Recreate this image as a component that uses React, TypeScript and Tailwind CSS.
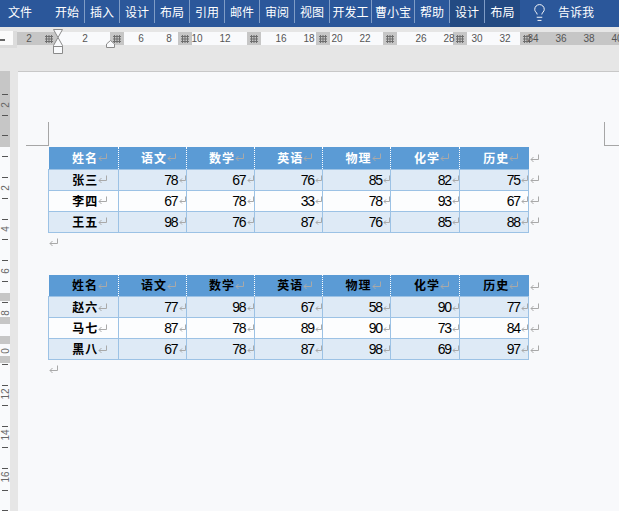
import { Lightbulb } from 'lucide-react'

const tabs = [
  ['开始', 'w-[35px]'],
  ['插入', 'w-[35px]'],
  ['设计', 'w-[35px]'],
  ['布局', 'w-[35px]'],
  ['引用', 'w-[35px]'],
  ['邮件', 'w-[35px]'],
  ['审阅', 'w-[35px]'],
  ['视图', 'w-[35px]'],
  ['开发工', 'w-[42px]'],
  ['曹小宝', 'w-[43px]'],
  ['帮助', 'w-[35px]'],
]

const whiteSeg = 'bg-[#f9fafc]'
const graySeg = 'bg-[#c6c6c6] flex items-center justify-center'

const rulerSegments = [
  ['w-[40px]', 'bg-[#c6c6c6] flex items-center justify-end pr-[4px]', true],
  ['w-[53px]', whiteSeg, false],
  ['w-[14px]', graySeg, true],
  ['w-[54px]', whiteSeg, false],
  ['w-[14px]', graySeg, true],
  ['w-[55px]', whiteSeg, false],
  ['w-[14px]', graySeg, true],
  ['w-[55px]', whiteSeg, false],
  ['w-[14px]', graySeg, true],
  ['w-[53px]', whiteSeg, false],
  ['w-[14px]', graySeg, true],
  ['w-[56px]', whiteSeg, false],
  ['w-[14px]', graySeg, true],
  ['w-[53px]', whiteSeg, false],
  ['flex-1', 'bg-[#c6c6c6] flex items-center justify-start pl-[3px]', true],
] as const

// 每 28px 一个刻度,空字符串是被分栏块盖住的位置
const rulerCells = ['2', '', '2', '', '6', '8', '10', '12', '', '16', '18', '20', '22', '', '26', '28', '30', '32', '34', '36', '38', '40']

const colWidths = ['w-[69.5px]', 'w-[68px]', 'w-[68px]', 'w-[68.5px]', 'w-[68px]', 'w-[69px]', 'w-[69px]']
const subjects = ['语文', '数学', '英语', '物理', '化学', '历史']

const table1 = [
  ['张三', 78, 67, 76, 85, 82, 75],
  ['李四', 67, 78, 33, 78, 93, 67],
  ['王五', 98, 76, 87, 76, 85, 88],
]
const table2 = [
  ['赵六', 77, 98, 67, 58, 90, 77],
  ['马七', 87, 78, 89, 90, 73, 84],
  ['黑八', 67, 78, 87, 98, 69, 97],
]

const ticks = [94, 115, 135, 156, 177, 198, 219, 239, 260, 281, 302, 364, 385, 405, 426, 447, 468, 490, 510]
const sideLabels = [
  ['2', 105], ['2', 188], ['4', 229], ['6', 271], ['8', 313], ['0', 351], ['12', 394], ['14', 435], ['16', 477],
] as const
const sideBands = [[293, 8], [317, 7], [336, 8], [356, 7]]

function ReturnMark() {
  return (
    <svg width="9" height="9" viewBox="0 0 9 9" fill="none" stroke="#a9a9a9" strokeWidth="1" className="shrink-0">
      <path d="M8.5 0.5V5.5H1M3.5 3L1 5.5L3.5 8" />
    </svg>
  )
}

// 数字单元格里的回车符更窄
function SmallMark() {
  return (
    <svg width="7" height="9" viewBox="0 0 7 9" fill="none" stroke="#a9a9a9" strokeWidth="1" className="shrink-0">
      <path d="M6.5 0.5V5.5H1M3 3.5L1 5.5L3 7.5" />
    </svg>
  )
}

function GridGlyph() {
  return (
    <svg width="8" height="8" viewBox="0 0 8 8" stroke="#6f6f6f" strokeWidth="1" className="shrink-0">
      <path d="M0 1.5H8M0 4H8M0 6.5H8M1.5 0V8M4 0V8M6.5 0V8" />
    </svg>
  )
}

function WordTable({ rows, headText }: { rows: (string | number)[][]; headText: string }) {
  return (
    <div className="flex items-start">
      <table className="table-fixed border-collapse w-[480px] text-black">
        <thead>
          <tr className="h-[22px] bg-[#5b9bd5]">
            {['姓名', ...subjects].map((s, i) => (
              <th key={s} className={`${colWidths[i]} p-0 ${i < 6 ? 'border-r border-dotted border-r-white' : ''}`}>
                <div className={`flex items-center justify-center font-bold text-[12px] leading-[16px] tracking-[1px] ${headText} [font-family:'Noto_Sans_CJK_SC',sans-serif]`}>
                  <span>{s}</span>
                  <span className="mr-[-13px]"><ReturnMark /></span>
                </div>
              </th>
            ))}
          </tr>
        </thead>
        <tbody>
          {rows.map((row, r) => (
            <tr key={r} className={`h-[21px] ${r % 2 === 0 ? 'bg-[#deeaf6]' : 'bg-[#fcfdfe]'}`}>
              {row.map((v, i) =>
                i === 0 ? (
                  <td key={i} className="p-0 border border-[#9cc2e5]">
                    <div className="flex items-center justify-center font-bold text-[12px] leading-[16px] tracking-[1px] [font-family:'Noto_Sans_CJK_SC',sans-serif]">
                      <span>{v}</span>
                      <span className="mr-[-13px]"><ReturnMark /></span>
                    </div>
                  </td>
                ) : (
                  <td key={i} className="p-0 border border-[#9cc2e5]">
                    <div className="flex items-center justify-end text-[14px] leading-[16px] tracking-[-1.1px] [font-family:'Liberation_Sans',sans-serif]">
                      <span className="pr-[1px]">{v}</span>
                      <SmallMark />
                    </div>
                  </td>
                ),
              )}
            </tr>
          ))}
        </tbody>
      </table>
      <div className="flex flex-col ml-[1px] pt-[7px] gap-[12px]">
        {[0, 1, 2, 3].map((i) => (
          <ReturnMark key={i} />
        ))}
      </div>
    </div>
  )
}

export default function App() {
  return (
    <div className="w-[619px] h-[511px] overflow-hidden flex flex-col bg-[#e6e6e6] text-[#333] [font-family:'Noto_Sans_CJK_SC',sans-serif]">
      {/* 标题栏 */}
      <div className="h-[27px] shrink-0 flex items-start bg-[#2b579a] text-white text-[12px]">
        <div className="w-[50px] h-[23px] pl-[8px] flex items-center">文件</div>
        {tabs.map(([label, w]) => (
          <div key={label} className={`${w} h-[23px] shrink-0 flex items-center justify-center border-r border-[#7f9cc6]`}>
            {label}
          </div>
        ))}
        <div className="w-[70px] h-full flex items-start bg-[#234a82]">
          <div className="w-[35px] h-[23px] flex items-center justify-center border-r border-[#7f9cc6]">设计</div>
          <div className="w-[35px] h-[23px] flex items-center justify-center">布局</div>
        </div>
        <div className="w-[38px] h-full flex items-center justify-center pb-[3px]">
          <Lightbulb size={19} strokeWidth={1.2} color="#ffffff" />
        </div>
        <div className="h-full flex items-center pb-[3px] whitespace-nowrap">告诉我</div>
      </div>

      {/* 水平标尺 */}
      <div className="h-[44px] shrink-0 pt-[5px] flex items-start">
        <div className="w-[17px] h-[17px] shrink-0 -mt-[1px] bg-[#dcdcdc] pr-[4px] pb-[3px]">
          <div className="relative w-[13px] h-[14px] bg-[#fbfbfb]">
            <div className="absolute left-0 bottom-[4px] w-[5px] h-[2px] bg-[#666]" />
          </div>
        </div>
        <div className="relative flex-1 h-[13px] flex">
          {rulerSegments.map(([w, bg, grid], i) => (
            <div key={i} className={`${w} h-full ${bg}`}>
              {grid && <GridGlyph />}
            </div>
          ))}
          <div className="absolute inset-0 -left-[2px] flex text-[10px] leading-[13px] text-[#555] [font-family:'Liberation_Sans',sans-serif]">
            {rulerCells.map((c, i) => (
              <div key={i} className="w-[28px] shrink-0 text-center">
                {c}
              </div>
            ))}
          </div>
          {/* 缩进滑块 */}
          <svg width="10" height="25" viewBox="0 0 10 25" fill="#f9fafc" stroke="#8a8a8a" className="absolute left-[36px] -top-[3px]">
            <path d="M0.5 0.5H9.5L5 8.5L9.5 16.5V24.5H0.5V16.5L5 8.5Z" />
            <path d="M0.5 17.5H9.5" />
          </svg>
          <svg width="9" height="8" viewBox="0 0 9 8" fill="#f9fafc" stroke="#8a8a8a" className="absolute left-[89px] top-[8px]">
            <path d="M0.5 4L4.5 0.5L8.5 4V7.5H0.5Z" />
          </svg>
        </div>
      </div>

      <div className="flex-1 flex min-h-0">
        {/* 垂直标尺 */}
        <div className="relative w-[18px] shrink-0 flex">
          <div className="w-[10px] bg-[#f9fafc]">
            <div className="h-[76px] bg-[#c6c6c6]" />
          </div>
          {sideBands.map(([y, h]) => (
            <div key={y} className="absolute left-0 w-[10px] bg-[#c6c6c6]" style={{ top: y - 71, height: h }} />
          ))}
          {ticks.map((y) => (
            <div key={y} className="absolute left-[2px] w-[6px] h-[1px] bg-[#555]" style={{ top: y - 71 }} />
          ))}
          {sideLabels.map(([t, y], i) => (
            <div
              key={i}
              className="absolute left-0 w-[10px] h-[10px] flex items-center justify-center -rotate-90 text-[10px] text-[#666] [font-family:'Liberation_Sans',sans-serif]"
              style={{ top: y - 76 }}
            >
              {t}
            </div>
          ))}
        </div>

        {/* 页面 */}
        <div className="relative flex-1 bg-[#f8f9fb] border-t border-[#c8c8c8] pl-[30px] pt-[75px]">
          <div className="absolute left-[8px] top-[50px] w-[23px] h-[24px] border-r border-b border-[#a6a6a6]" />
          <div className="absolute left-[586px] right-0 top-[50px] h-[24px] border-l border-b border-[#a6a6a6]" />
          <WordTable rows={table1} headText="text-white" />
          <div className="h-[42px] pt-[5px] pl-[1px]">
            <ReturnMark />
          </div>
          <WordTable rows={table2} headText="text-black" />
          <div className="pt-[5px] pl-[1px]">
            <ReturnMark />
          </div>
        </div>
      </div>
    </div>
  )
}
